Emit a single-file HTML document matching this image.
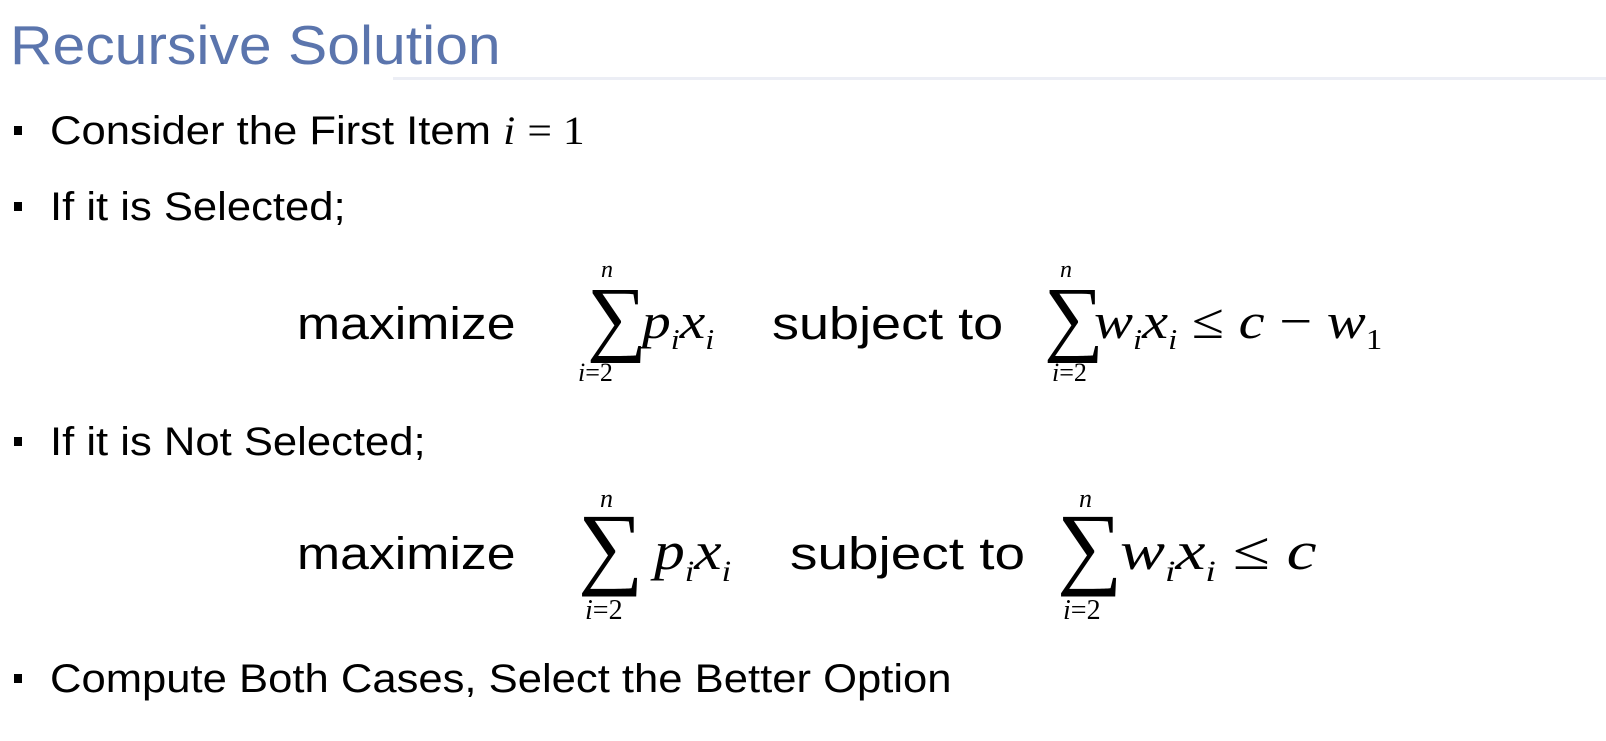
<!DOCTYPE html>
<html><head><meta charset="utf-8"><style>
body{margin:0;width:1606px;height:741px;background:#fff;position:relative;overflow:hidden;font-family:"Liberation Sans",sans-serif;color:#000}
.a{position:absolute;white-space:nowrap;line-height:1;transform-origin:0 0}
.t{font-size:55px;color:#5b75ad;left:10px;top:18px;transform:scaleX(1.07)}
.b{font-size:40px;left:50px;transform:scaleX(1.09)}
.sq{position:absolute;width:8px;height:9px;background:#000;left:14px}
.m{font-family:"Liberation Serif",serif;font-style:italic}
.s{font-family:"Liberation Serif",serif;}
.w{transform:scaleX(1.15)}
</style></head><body>
<div class="a t">Recursive Solution</div>
<div style="position:absolute;left:393px;top:77px;width:1213px;height:3px;background:#eceef5"></div>

<div class="sq" style="top:126px"></div><div class="a b" style="top:111px">Consider the First Item <span class="m">i</span> <span class="s">= 1</span></div>
<div class="sq" style="top:202px"></div><div class="a b" style="top:187px">If it is Selected;</div>
<div class="sq" style="top:437px"></div><div class="a b" style="top:422px">If it is Not Selected;</div>
<div class="sq" style="top:674px"></div><div class="a b" style="top:659px">Compute Both Cases, Select the Better Option</div>

<!-- row 1 -->
<div class="a w" style="font-size:45px;left:297px;top:301px">maximize</div>
<div class="a s" style="font-size:84px;left:587px;top:276px">∑</div>
<div class="a m" style="font-size:24px;left:601px;top:258px">n</div>
<div class="a m" style="font-size:26px;left:578px;top:360px">i<span class="s" style="font-style:normal">=2</span></div>
<div class="a m" style="font-size:50px;left:642px;top:296px;transform:scaleX(1.15)">p<sub style="font-size:28px">i</sub>x<sub style="font-size:28px">i</sub></div>
<div class="a w" style="font-size:45px;left:772px;top:301px;transform:scaleX(1.2)">subject to</div>
<div class="a s" style="font-size:84px;left:1044px;top:276px">∑</div>
<div class="a m" style="font-size:24px;left:1060px;top:258px">n</div>
<div class="a m" style="font-size:26px;left:1052px;top:360px">i<span class="s" style="font-style:normal">=2</span></div>
<div class="a m" style="font-size:50px;left:1094px;top:296px;transform:scaleX(1.17)">w<sub style="font-size:28px">i</sub>x<sub style="font-size:28px">i</sub> <span class="s" style="font-style:normal">≤</span> c <span class="s" style="font-style:normal">−</span> w<sub style="font-size:28px;font-style:normal">1</sub></div>

<!-- row 2 -->
<div class="a w" style="font-size:45px;left:297px;top:531px">maximize</div>
<div class="a s" style="font-size:92px;left:578px;top:500px">∑</div>
<div class="a m" style="font-size:26px;left:600px;top:486px">n</div>
<div class="a m" style="font-size:28px;left:585px;top:597px">i<span class="s" style="font-style:normal">=2</span></div>
<div class="a m" style="font-size:54px;left:654px;top:524px;transform:scaleX(1.14)">p<sub style="font-size:30px">i</sub>x<sub style="font-size:30px">i</sub></div>
<div class="a w" style="font-size:45px;left:790px;top:531px;transform:scaleX(1.22)">subject to</div>
<div class="a s" style="font-size:92px;left:1057px;top:500px">∑</div>
<div class="a m" style="font-size:26px;left:1079px;top:486px">n</div>
<div class="a m" style="font-size:28px;left:1063px;top:597px">i<span class="s" style="font-style:normal">=2</span></div>
<div class="a m" style="font-size:54px;left:1120px;top:524px;transform:scaleX(1.25)">w<sub style="font-size:30px">i</sub>x<sub style="font-size:30px">i</sub> <span class="s" style="font-style:normal">≤</span> c</div>
</body></html>
